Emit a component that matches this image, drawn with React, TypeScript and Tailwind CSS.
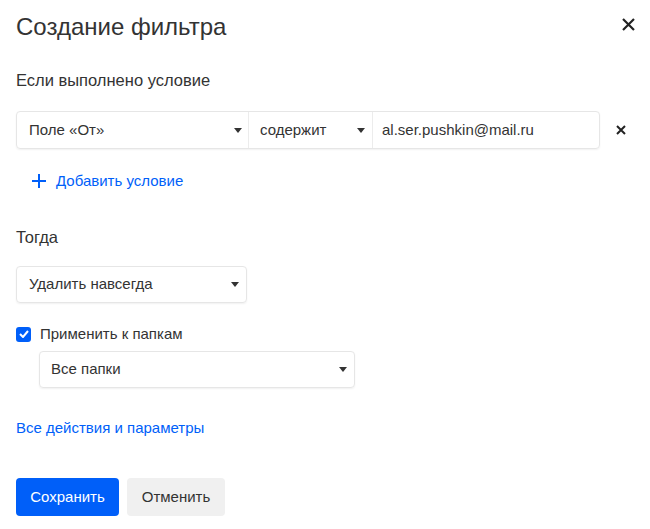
import React from "react";

const Arrow = () => (
  <svg width="8" height="5" viewBox="0 0 8 5" className="shrink-0">
    <path d="M0 0 L8 0 L4 5 Z" fill="#333" />
  </svg>
);

export default function App() {
  return (
    <div className="w-[650px] h-[529px] bg-white text-[#333] relative" style={{ fontFamily: '"Liberation Sans", Arial, sans-serif' }}>
      <div className="flex flex-col px-4">
        <div className="h-[52px] flex items-center">
          <h1 className="text-[24px] leading-none text-[#333] pt-[1px]">Создание фильтра</h1>
        </div>
        <div className="mt-[16px] h-[24px] flex items-center text-[16.5px]">Если выполнено условие</div>
        <div className="mt-[19px] flex items-center">
          <div className="w-[584px] h-[38px] flex border border-[#e6e6e6] rounded-[4px] shadow-[0_1px_2px_rgba(0,0,0,0.06)]">
            <div className="w-[232px] flex items-center justify-between pl-[12px] pr-[6px] border-r border-[#ececec] text-[15px]">
              <span>Поле «От»</span>
              <Arrow />
            </div>
            <div className="w-[124px] flex items-center justify-between pl-[11px] pr-[7px] border-r border-[#ececec] text-[15px]">
              <span>содержит</span>
              <Arrow />
            </div>
            <div className="flex-1 flex items-center pl-[9px] text-[15px]">al.ser.pushkin@mail.ru</div>
          </div>
          <svg width="10" height="10" viewBox="0 0 10 10" className="ml-[16px]">
            <path d="M1 1 L9 9 M9 1 L1 9" stroke="#222" strokeWidth="2" />
          </svg>
        </div>
        <div className="mt-[18px] flex items-center h-[28px] pl-[16px] text-[15px] text-[#005ff9]">
          <svg width="14" height="14" viewBox="0 0 14 14">
            <path d="M7 0 V14 M0 7 H14" stroke="#005ff9" strokeWidth="2" />
          </svg>
          <span className="ml-[10px]">Добавить условие</span>
        </div>
        <div className="mt-[30px] h-[24px] flex items-center text-[16.5px]">Тогда</div>
        <div className="mt-[17px] w-[231px] h-[37px] flex items-center justify-between pl-[12px] pr-[7px] border border-[#e6e6e6] rounded-[4px] shadow-[0_1px_2px_rgba(0,0,0,0.06)] text-[15px]">
          <span>Удалить навсегда</span>
          <Arrow />
        </div>
        <div className="mt-[23px] flex items-center h-[16px]">
          <div className="w-[15px] h-[15px] rounded-[3px] bg-[#005ff9] flex items-center justify-center">
            <svg width="10" height="8" viewBox="0 0 10 8">
              <path d="M1 4 L4 7 L9 1" stroke="white" strokeWidth="2" fill="none" />
            </svg>
          </div>
          <span className="ml-[9px] text-[15px]">Применить к папкам</span>
        </div>
        <div className="mt-[9px] ml-[23px] w-[316px] h-[37px] flex items-center justify-between pl-[11px] pr-[7px] border border-[#e6e6e6] rounded-[4px] shadow-[0_1px_2px_rgba(0,0,0,0.06)] text-[15px]">
          <span>Все папки</span>
          <Arrow />
        </div>
        <div className="mt-[30px] h-[20px] flex items-center text-[15px] text-[#005ff9]">Все действия и параметры</div>
        <div className="mt-[40px] flex gap-[8px]">
          <button className="w-[103px] h-[38px] rounded-[4px] bg-[#005ff9] text-white text-[15px]">Сохранить</button>
          <button className="w-[98px] h-[38px] rounded-[4px] bg-[#f0f0f0] text-[#333] text-[15px]">Отменить</button>
        </div>
      </div>
      <svg width="13" height="13" viewBox="0 0 13 13" className="absolute left-[622px] top-[18px]">
        <path d="M1 1 L12 12 M12 1 L1 12" stroke="#222" strokeWidth="2.2" />
      </svg>
    </div>
  );
}
